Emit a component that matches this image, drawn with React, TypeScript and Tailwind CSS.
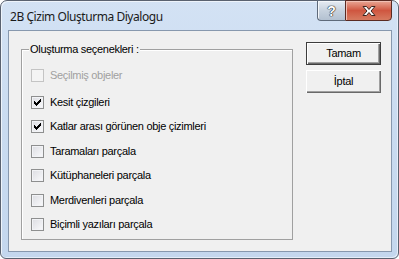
import React from "react";

function Check() {
  return (
    <svg width="7" height="7" viewBox="0 0 7 7" className="absolute left-[2px] top-[2px]" shapeRendering="crispEdges">
      <path
        fill="#000"
        d="M6 0h1v1h-1zM5 1h2v1h-2zM0 2h1v1h-1zM4 2h3v1h-3zM0 3h2v1h-2zM3 3h3v1h-3zM0 4h5v1h-5zM1 5h3v1h-3zM2 6h1v1h-1z"
      />
    </svg>
  );
}

function Box({ checked, disabled }: { checked: boolean; disabled: boolean }) {
  return (
    <div
      className={
        disabled
          ? "relative w-[13px] h-[13px] shrink-0 border border-[#c4c4c4] bg-[#f4f4f4]"
          : "relative w-[13px] h-[13px] shrink-0 border border-[#8e8f8f] bg-gradient-to-br from-[#dcdde2] to-[#fafafc] shadow-[inset_0_0_0_1px_#f2f3f6]"
      }
    >
      {checked && <Check />}
    </div>
  );
}

const items = [
  { label: "Seçilmiş objeler", checked: false, disabled: true, mt: "mt-[19px]" },
  { label: "Kesit çizgileri", checked: true, disabled: false, mt: "mt-[14px]" },
  { label: "Katlar arası görünen obje çizimleri", checked: true, disabled: false, mt: "mt-[11px]" },
  { label: "Taramaları parçala", checked: false, disabled: false, mt: "mt-[12px]" },
  { label: "Kütüphaneleri parçala", checked: false, disabled: false, mt: "mt-[11px]" },
  { label: "Merdivenleri parçala", checked: false, disabled: false, mt: "mt-[12px]" },
  { label: "Biçimli yazıları parçala", checked: false, disabled: false, mt: "mt-[11px]" },
];

export default function App() {
  return (
    <div className="w-[399px] h-[259px] bg-white overflow-hidden">
      <div className="w-full h-full flex flex-col border border-[#5a6270] rounded-t-[7px] rounded-b-[6px] bg-gradient-to-b from-[#d3e2f4] via-[#c9dbf0] to-[#c4d7ee] shadow-[inset_1px_1px_0_#eef4fb,inset_-1px_-1px_0_#e4eef9]">
        {/* title bar */}
        <div className="h-[29px] flex items-start shrink-0">
          <div className="pl-[9px] pt-[8px] text-[12px] leading-[16px] tracking-[-0.45px] text-[#1a1a1a] [font-family:'Noto_Sans','Open_Sans',sans-serif]">
            2B Çizim Oluşturma Diyalogu
          </div>
          <div className="ml-auto mr-[6px] -mt-px flex">
            <div className="w-[28px] h-[21px] flex items-center justify-center border border-[#5e6a7a] border-r-0 rounded-bl-[4px] bg-gradient-to-b from-[#e6ecf3] via-[#c7d2de] to-[#b3c1d1] shadow-[inset_1px_1px_0_#f4f7fa]">
              <span className="text-[14px] leading-[14px] font-bold text-white [font-family:'Liberation_Sans',sans-serif] [text-shadow:0_0_1px_#1a1a1a,0_0_1px_#1a1a1a,0_0_1px_#1a1a1a]">
                ?
              </span>
            </div>
            <div className="w-[47px] h-[21px] flex items-center justify-center border border-[#5a2a22] rounded-br-[4px] bg-gradient-to-b from-[#e8a695] via-[#cf5640] to-[#d67a60] shadow-[inset_1px_1px_0_#f0c0b4]">
              <svg width="16" height="12" viewBox="0 0 16 12">
                <path
                  d="M2 1.5h3.5L8 4.5l2.5-3H14L10 6l4 4.5h-3.5L8 7.5l-2.5 3H2L6 6z"
                  fill="#fff"
                  stroke="#3a2520"
                  strokeWidth="1"
                  strokeLinejoin="round"
                />
              </svg>
            </div>
          </div>
        </div>
        {/* client */}
        <div className="ml-[7px] mr-[6px] mb-[6px] flex-1 border border-[#8798ae] bg-[#f0f0f0] flex items-start text-[11px] leading-[13px] tracking-[-0.3px] text-black [font-family:'Liberation_Sans',Arial,sans-serif]">
          <div className="ml-[12px] mt-[18px] w-[272px] h-[191px] border border-[#a0a0a0] relative flex flex-col pl-[9px] shadow-[inset_1px_1px_0_#ffffff]">
            <div className="absolute left-[7px] top-[-7px] px-[1px] bg-[#f0f0f0]">Oluşturma seçenekleri :</div>
            {items.map((it) => (
              <div key={it.label} className={`flex items-center h-[13px] ${it.mt}`}>
                <Box checked={it.checked} disabled={it.disabled} />
                <span className={it.disabled ? "ml-[6px] text-[#a0a0a0]" : "ml-[6px]"}>{it.label}</span>
              </div>
            ))}
          </div>
          <div className="ml-[13px] mt-[11px] flex flex-col">
            <div className="w-[75px] h-[23px] flex items-center justify-center border border-[#3c3c3c] bg-[#f0f0f0] shadow-[inset_1px_1px_0_#ffffff,inset_-1px_-1px_0_#696969,inset_-2px_-2px_0_#a0a0a0]">
              Tamam
            </div>
            <div className="mt-[5px] w-[75px] h-[23px] flex items-center justify-center bg-[#f0f0f0] shadow-[inset_1px_1px_0_#ffffff,inset_-1px_-1px_0_#696969,inset_-2px_-2px_0_#a0a0a0]">
              İptal
            </div>
          </div>
        </div>
      </div>
    </div>
  );
}
